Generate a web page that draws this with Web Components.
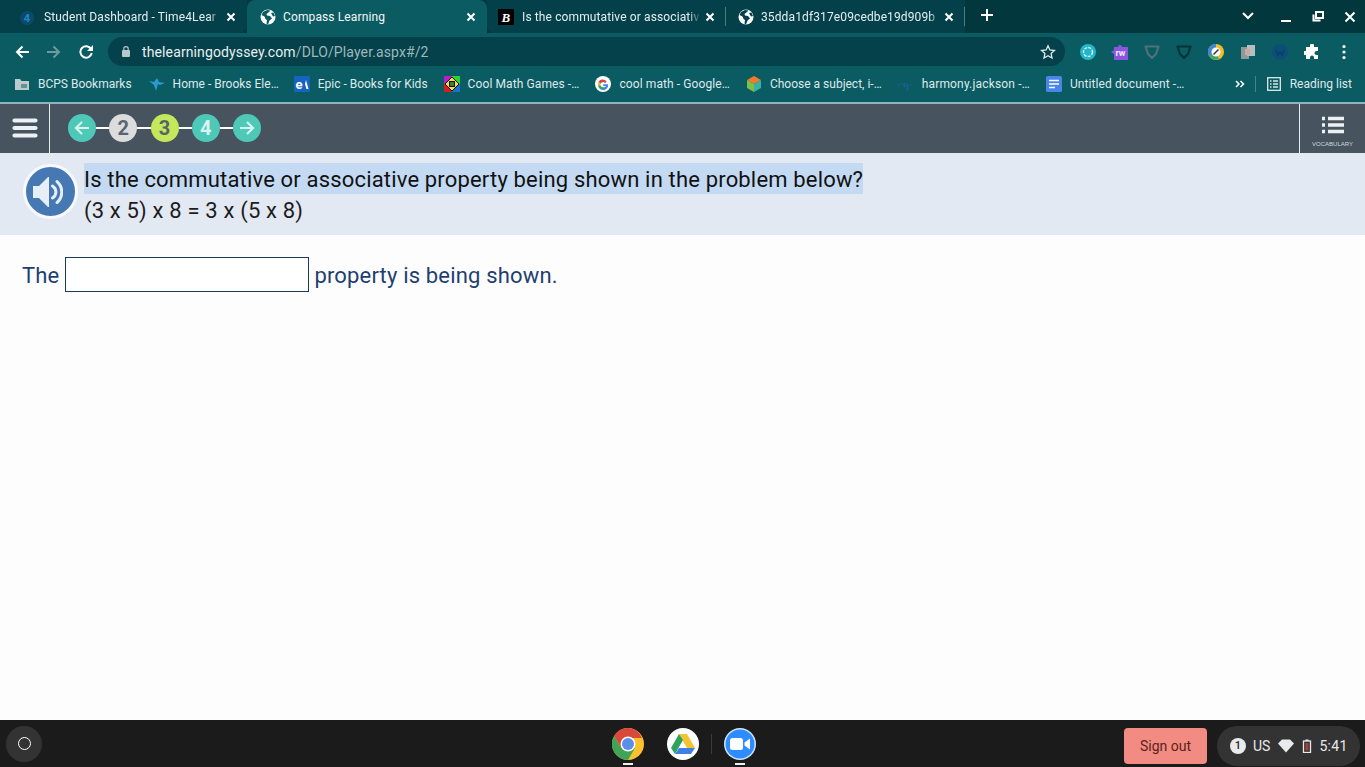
<!DOCTYPE html>
<html>
<head>
<meta charset="utf-8">
<title>Compass Learning</title>
<style>
html,body{margin:0;padding:0;height:100%;overflow:hidden;background:#fdfdfd;font-family:Roboto,"Liberation Sans",sans-serif}
body{display:flex;flex-direction:column;height:767px}
</style>
</head>
<body>
<tab-strip></tab-strip>
<nav-toolbar></nav-toolbar>
<bookmark-bar></bookmark-bar>
<player-bar></player-bar>
<question-panel>
  <span slot="prompt">Is the commutative or associative property being shown in the problem below?</span>
  <span slot="problem">(3 x 5) x 8 = 3 x (5 x 8)</span>
</question-panel>
<answer-area></answer-area>
<os-shelf></os-shelf>

<script>
const globe = `<svg width="16" height="16" viewBox="0 0 16 16"><circle cx="8" cy="8" r="7.500" fill="#fff"/><path d="M7 1 3 3 1.500 6l3 1.500 1 2.500L7 11l-.5 3.500 1.500 1 1.500-4 2.500-2-2-2.500-3-.5-.5-1.500L9 3l1.500-1.500z" fill="#0b5b62"/><path d="M11 4l2.500-.5L15 7l-2 .5z" fill="#0b5b62"/></svg>`;

class TabStrip extends HTMLElement{
    constructor(){
        super();
        this.attachShadow({mode:'open'});
        this.shadowRoot.innerHTML = `
        <style>
            :host{display:flex;height:33px;background:#03373e;color:#e4eeee;font:12px Roboto,sans-serif;align-items:stretch;padding-left:8px;flex:none}
            .tab{width:239px;display:flex;align-items:center;padding:0 9px;box-sizing:border-box;position:relative;gap:9px}
            .tab.first{background:#03404a;border-radius:0 0 8px 0;margin-left:-8px;width:247px;padding-left:19px}
            .tab.on{background:#0b5b62;border-radius:8px 8px 0 0;width:240px;padding-left:13px;gap:7px;color:#f4f8f8}
            .tab.after{background:#03404a;border-radius:0 0 0 8px}
            .tab.last{background:#03404a}
            .sep{position:absolute;right:0;top:7px;height:19px;width:1px;background:#4f7a80}
            .ico{width:16px;height:16px;flex:none;display:flex}
            .t{flex:1;white-space:nowrap;overflow:hidden;letter-spacing:.12px;-webkit-mask-image:linear-gradient(to left,transparent 0,#000 12px);mask-image:linear-gradient(to left,transparent 0,#000 12px)}
            .x{width:14px;height:14px;flex:none;margin-left:-6px}
            .x path,.ctl path{stroke:#fff;stroke-width:2;fill:none}
            .fill{flex:1;display:flex;align-items:flex-start;padding-top:7px;background:#03373e}
            .plus{margin-left:14px;width:16px;height:16px}
            .ctl{position:absolute;top:8px}
        </style>
        <div class="tab first">
            <span class="ico"><svg width="18" height="18" viewBox="0 0 18 18"><path d="M9 1a8 8 0 1 0 .01 0z" fill="#0b4a68"/><text x="5" y="14" font-size="13" font-weight="700" font-family="Roboto" fill="#1f86c7">4</text></svg></span>
            <span class="t">Student Dashboard - Time4Lear</span>
            <svg class="x" viewBox="0 0 14 14"><path d="M3.500 3.500l7 7M10.500 3.500l-7 7"/></svg>
        </div>
        <div class="tab on">
            <span class="ico">${globe}</span>
            <span class="t" style="-webkit-mask-image:none;mask-image:none">Compass Learning</span>
            <svg class="x" viewBox="0 0 14 14"><path d="M3.500 3.500l7 7M10.500 3.500l-7 7"/></svg>
        </div>
        <div class="tab after" style="padding-left:11px;gap:8px">
            <span class="ico"><svg width="16" height="16" viewBox="0 0 16 16"><rect width="16" height="16" fill="#000"/><text x="3.500" y="12.500" font-size="13" font-weight="700" font-style="italic" font-family="Liberation Serif" fill="#fff">B</text></svg></span>
            <span class="t">Is the commutative or associativ</span>
            <svg class="x" viewBox="0 0 14 14"><path d="M3.500 3.500l7 7M10.500 3.500l-7 7"/></svg>
            <i class="sep"></i>
        </div>
        <div class="tab last" style="padding-left:12px;gap:7px">
            <span class="ico">${globe.replace(/#0b5b62/g,'#03404a')}</span>
            <span class="t">35dda1df317e09cedbe19d909b</span>
            <svg class="x" viewBox="0 0 14 14"><path d="M3.500 3.500l7 7M10.500 3.500l-7 7"/></svg>
            <i class="sep"></i>
        </div>
        <div class="fill">
            <svg class="plus" viewBox="0 0 16 16"><path d="M8 2v12M2 8h12" stroke="#fff" stroke-width="2"/></svg>
        </div>
        <svg class="ctl" style="left:1241px;top:10px" width="14" height="12" viewBox="0 0 14 12"><path d="M2 3l5 5 5-5"/></svg>
        <svg class="ctl" style="left:1279px;top:10px" width="14" height="14" viewBox="0 0 14 14"><path d="M2 11h10"/></svg>
        <svg class="ctl" style="left:1311px;top:9px" width="14" height="14" viewBox="0 0 14 14"><path d="M5 3h7v6H5zM2.500 5.500v6h7" stroke-width="1.800"/></svg>
        <svg class="ctl" style="left:1343px;top:10px" width="14" height="14" viewBox="0 0 14 14"><path d="M2.500 2.500l9 9M11.500 2.500l-9 9"/></svg>
        `;
    }
}
customElements.define('tab-strip',TabStrip);

class NavToolbar extends HTMLElement{
    constructor(){
        super();
        this.attachShadow({mode:'open'});
        this.shadowRoot.innerHTML = `
        <style>
            :host{display:flex;height:34px;background:#0b5b62;align-items:center;flex:none;color:#fff;padding:3px 0 0 15px;box-sizing:border-box}
            svg{flex:none;display:block}
            .back{margin-right:18px}
            .fwd{margin-right:18px}
            .omni{width:957px;height:29px;border-radius:15px;background:#04414a;margin-left:15px;display:flex;align-items:center;box-sizing:border-box;padding-left:14px;font:14px Roboto,sans-serif;letter-spacing:.12px}
            .host{color:#e8f0f0;margin-left:12px}
            .path{color:#9db9bc}
            .star{margin-left:auto;margin-right:9px}
            .exts{display:flex;align-items:center;gap:16px;margin-left:15px}
        </style>
        <svg class="back" width="14" height="14" viewBox="0 0 14 14"><path d="M14 7H2M7.500 1.500 2 7l5.500 5.500" stroke="#fff" stroke-width="2" fill="none"/></svg>
        <svg class="fwd" width="14" height="14" viewBox="0 0 14 14"><path d="M0 7h12M6.500 1.500 12 7l-5.500 5.500" stroke="#6f9a9e" stroke-width="2" fill="none"/></svg>
        <svg width="14" height="14" viewBox="0 0 14 14"><path d="M12 4A5.700 5.700 0 1 0 12.700 8" stroke="#fff" stroke-width="2" fill="none"/><path d="M14 0v6H8z" fill="#fff"/></svg>
        <div class="omni">
            <svg width="8" height="11" viewBox="0 0 8 11"><rect y="4" width="8" height="7" rx="1" fill="#b5c8ca"/><path d="M1.800 4V2.800a2.200 2.200 0 0 1 4.400 0V4" stroke="#b5c8ca" stroke-width="1.200" fill="none"/></svg>
            <span class="host">thelearningodyssey.com</span><span class="path">/DLO/Player.aspx#/2</span>
            <svg class="star" width="16" height="16" viewBox="0 0 16 16"><path d="M8 1.800l1.900 4.200 4.500.5-3.300 3 .9 4.500L8 11.700 4 14l.9-4.500-3.300-3 4.500-.5z" stroke="#dfe9ea" stroke-width="1.300" fill="none"/></svg>
        </div>
        <div class="exts">
            <svg width="16" height="16" viewBox="0 0 16 16"><circle cx="8" cy="8" r="8" fill="#23b6c9"/><circle cx="8" cy="8" r="4.500" stroke="#d8f4f7" stroke-width="1.400" stroke-dasharray="3 1.200" fill="none"/></svg>
            <svg width="16" height="16" viewBox="0 0 16 16" overflow="visible"><path d="M-1 8l3-2V3h4a2 2 0 0 1 4 0h6v13H2v-6z" fill="#8a56e0"/><text x="3.500" y="12" font-size="9" font-weight="700" font-family="Roboto" fill="#f1eaff">rw</text></svg>
            <svg width="16" height="16" viewBox="0 0 16 16"><path d="M1.500 2.500h13l-2.500 7.500L8 14 4 10z" stroke="#4d7277" stroke-width="2.200" stroke-linejoin="round" fill="none"/></svg>
            <svg width="16" height="16" viewBox="0 0 16 16"><path d="M1.500 2.500h13l-2.500 7.500L8 14 4 10z" stroke="#063238" stroke-width="2.200" stroke-linejoin="round" fill="none"/></svg>
            <svg width="16" height="16" viewBox="0 0 16 16"><circle cx="8" cy="8" r="8" fill="#f1bd2e"/><path d="M8 0a8 8 0 0 0-7 12l7-4z" fill="#3f87d8"/><path d="M1 12a8 8 0 0 0 10 3L8 8z" fill="#3ea860"/><circle cx="8" cy="8" r="4.500" fill="#fff"/><path d="M5.500 10.500 10.500 5.500" stroke="#333" stroke-width="1.500"/></svg>
            <svg width="16" height="16" viewBox="0 0 16 16"><rect x="1" y="3" width="8" height="12" fill="#8a9b9d"/><rect x="7" y="1" width="8" height="11" fill="#b4bfc0"/><rect x="5" y="5" width="5" height="6" fill="#d3a6a0"/></svg>
            <svg width="16" height="16" viewBox="0 0 16 16"><circle cx="8" cy="8" r="8" fill="#0b4f78"/><path d="M4 6l2 5 2-3 2 3 2-5" stroke="#0a3f63" stroke-width="1.500" fill="none"/></svg>
            <svg width="16" height="16" viewBox="0 0 16 16"><path d="M6 1.500a2 2 0 0 1 4 0V3h4v4h-1.500a2 2 0 0 0 0 4H14v4h-4v-1.500a2 2 0 0 0-4 0V15H2v-4H.5a2 2 0 0 1 0-4H2V3h4z" fill="#fff"/></svg>
            <svg width="16" height="16" viewBox="0 0 16 16"><circle cx="8" cy="2.500" r="1.600" fill="#fff"/><circle cx="8" cy="8" r="1.600" fill="#fff"/><circle cx="8" cy="13.500" r="1.600" fill="#fff"/></svg>
        </div>
        `;
    }
}
customElements.define('nav-toolbar',NavToolbar);

class BookMark extends HTMLElement{
    constructor(){
        super();
        this.attachShadow({mode:'open'});
        this.shadowRoot.innerHTML = `
        <style>
            :host{display:inline-flex;align-items:center;gap:8px;white-space:nowrap;margin-right:16px}
            ::slotted(svg){flex:none}
        </style>
        <slot name="icon"></slot><slot></slot>`;
    }
}
customElements.define('book-mark',BookMark);

class BookmarkBar extends HTMLElement{
    constructor(){
        super();
        this.attachShadow({mode:'open'});
        this.shadowRoot.innerHTML = `
        <style>
            :host{display:flex;height:37px;background:#0b5b62;align-items:center;flex:none;color:#dfe9ea;font:12px Roboto,sans-serif;padding:0 0 1px 15px;box-sizing:border-box;border-bottom:2px solid #8fb3c0}
            .row{display:flex;align-items:center;flex:1}
            svg{display:block}
            .more{margin-left:auto;margin-right:9px}
            .div{width:1px;height:16px;background:#4f8085;margin-right:11px}
        </style>
        <div class="row">
            <book-mark style="gap:9px;margin-right:17px"><svg slot="icon" width="14" height="14" viewBox="0 0 14 14"><path d="M0 2h5l1.500 2H14v9H0z" fill="#b9cbcd"/><rect x="6" y="7" width="6" height="4" fill="#0b5b62" opacity=".5"/></svg>BCPS Bookmarks</book-mark>
            <book-mark style="margin-right:15px"><svg slot="icon" width="16" height="16" viewBox="0 0 16 16"><path d="M0 5l5 1 3-4 2 4 6 1-5 2-2-1-2 7-2-6z" fill="#2a9bd1"/></svg>Home - Brooks Ele…</book-mark>
            <book-mark><svg slot="icon" width="16" height="16" viewBox="0 0 16 16"><rect width="16" height="16" rx="1" fill="#1565c0"/><text x="1.500" y="13" font-size="13" font-weight="700" font-family="Roboto" fill="#fff">e</text><path d="M12 4l2.500 9h-2L11 8z" fill="#fff"/></svg>Epic - Books for Kids</book-mark>
            <book-mark style="letter-spacing:.1px"><svg slot="icon" width="16" height="16" viewBox="0 0 16 16"><rect width="8" height="8" fill="#b71cd1"/><rect x="8" width="8" height="8" fill="#2fd12f"/><rect y="8" width="8" height="8" fill="#d61c1c"/><rect x="8" y="8" width="8" height="8" fill="#1c6fd6"/><path d="M8 1l7 7-7 7-7-7z" fill="#f2e23a" stroke="#111"/><rect x="5.500" y="5.500" width="5" height="5" fill="#3f7d33" stroke="#111"/></svg>Cool Math Games -…</book-mark>
            <book-mark style="letter-spacing:.1px"><svg slot="icon" width="16" height="16" viewBox="0 0 16 16"><circle cx="8" cy="8" r="8" fill="#fff"/><path d="M13 8.200H8.200v1.900h2.700a3 3 0 1 1-.8-3.200l1.400-1.400A5 5 0 1 0 13 8.200z" fill="#4285f4"/><path d="M3.500 5.700 5.200 7A3 3 0 0 1 10.100 6.900l1.400-1.400A5 5 0 0 0 3.500 5.700z" fill="#ea4335"/><path d="M3.500 10.300 5.200 9a3 3 0 0 0 .5 1 3 3 0 0 0 3.500 1l1.500 1.300A5 5 0 0 1 3.500 10.300z" fill="#34a853"/><path d="M3.500 5.700a5 5 0 0 0 0 4.600L5.200 9a3 3 0 0 1 0-2z" fill="#fbbc05"/></svg>cool math - Google…</book-mark>
            <book-mark><svg slot="icon" width="16" height="16" viewBox="0 0 16 16"><path d="M8 0l7 4-7 4-7-4z" fill="#f47a2a"/><path d="M1 4l7 4v8l-7-4z" fill="#7cc04a"/><path d="M15 4l-7 4v8l7-4z" fill="#3bb0a6"/></svg>Choose a subject, i-…</book-mark>
            <book-mark style="letter-spacing:.17px"><svg slot="icon" width="16" height="16" viewBox="0 0 16 16"><path d="M0 9h2M3 8h2M6 7h1v4H6zM9 8h1v6H9zM12 9h2" stroke="#1f5f9c" stroke-width="1" fill="none"/></svg>harmony.jackson -…</book-mark>
            <book-mark style="letter-spacing:.1px"><svg slot="icon" width="16" height="16" viewBox="0 0 16 16"><rect width="16" height="16" rx="1.500" fill="#4a86e8"/><path d="M3 4.500h10M3 8h10M3 11.500h6" stroke="#fff" stroke-width="1.500"/></svg>Untitled document -…</book-mark>
            <svg class="more" width="12" height="12" viewBox="0 0 12 12"><path d="M2 3l3 3-3 3M6.500 3l3 3-3 3" stroke="#fff" stroke-width="1.500" fill="none"/></svg>
            <i class="div"></i>
            <book-mark style="gap:9px;margin-right:13px"><svg slot="icon" width="14" height="14" viewBox="0 0 14 14"><rect x=".7" y=".7" width="12.600" height="12.600" stroke="#dfe9ea" stroke-width="1.300" fill="none"/><path d="M3 4h1.500M3 7h1.500M3 10h1.500M6 4h5M6 7h5M6 10h5" stroke="#dfe9ea" stroke-width="1.300"/></svg>Reading list</book-mark>
        </div>
        `;
    }
}
customElements.define('bookmark-bar',BookmarkBar);

class StepDot extends HTMLElement{
    constructor(){
        super();
        this.attachShadow({mode:'open'});
        this.shadowRoot.innerHTML = `
        <style>
            :host{display:flex;width:28px;height:28px;border-radius:50%;align-items:center;justify-content:center;background:var(--dot,#4ec9b8);color:var(--ink,#fff);font:700 20px Roboto,sans-serif;flex:none}
        </style>
        <slot></slot>`;
    }
}
customElements.define('step-dot',StepDot);

class PlayerBar extends HTMLElement{
    constructor(){
        super();
        this.attachShadow({mode:'open'});
        this.shadowRoot.innerHTML = `
        <style>
            :host{display:flex;height:49px;background:#47535f;flex:none;align-items:stretch}
            .menu{width:49px;border-right:1px solid #e6ecef;display:flex;align-items:center;justify-content:center;padding-bottom:1px;box-sizing:content-box;height:48px}
            .steps{display:flex;align-items:center;padding:0 0 1px 18px;flex:1}
            .ln{width:13.250px;height:2px;background:#fff;flex:none}
            .vocab{width:66px;border-left:1px solid #e6ecef;display:flex;flex-direction:column;align-items:center;color:#d3dade;font:6px "Liberation Sans",sans-serif;padding-top:12px;box-sizing:border-box}
            .vocab svg{margin-bottom:7px}
            svg{display:block}
        </style>
        <div class="menu"><svg width="26" height="20" viewBox="0 0 26 20"><path d="M2.500 2.500h21M2.500 10h21M2.500 17.500h21" stroke="#eef1f3" stroke-width="4.200" stroke-linecap="round"/></svg></div>
        <div class="steps">
            <step-dot><svg width="18" height="18" viewBox="0 0 18 18"><path d="M16 9H3M9 3 3 9l6 6" stroke="#d9f3ef" stroke-width="2.200" fill="none"/></svg></step-dot>
            <i class="ln"></i>
            <step-dot style="--dot:#dcdcdc;--ink:#5a6570">2</step-dot>
            <i class="ln"></i>
            <step-dot style="--dot:#c4e85a;--ink:#55656a">3</step-dot>
            <i class="ln"></i>
            <step-dot style="--ink:#d9f3ef">4</step-dot>
            <i class="ln"></i>
            <step-dot><svg width="18" height="18" viewBox="0 0 18 18"><path d="M2 9h13M9 3l6 6-6 6" stroke="#d9f3ef" stroke-width="2.200" fill="none"/></svg></step-dot>
        </div>
        <div class="vocab">
            <svg width="22" height="18" viewBox="0 0 22 18"><path d="M0 2.500h3M6 2.500h16M0 9h3M6 9h16M0 15.500h3M6 15.500h16" stroke="#eef1f3" stroke-width="3.400"/></svg>
            <span>VOCABULARY</span>
        </div>
        `;
    }
}
customElements.define('player-bar',PlayerBar);

class QuestionPanel extends HTMLElement{
    constructor(){
        super();
        this.attachShadow({mode:'open'});
        this.shadowRoot.innerHTML = `
        <style>
            :host{display:flex;height:82px;background:#e3e9f3;flex:none;padding:10px 0 0 23px;box-sizing:border-box;color:#1c1c1c;font:22px Roboto,sans-serif;letter-spacing:.17px;gap:6px}
            .spk{width:55px;height:55px;border-radius:50%;background:#4679b4;border:3px solid #f7f9fc;box-sizing:border-box;display:flex;align-items:center;justify-content:center;flex:none;margin-top:1px}
            .spk svg{margin-right:5px}
            .txt{display:flex;flex-direction:column;align-items:flex-start}
            .sel{background:#c4daf3;color:#111;padding-top:2px;line-height:29px}
            .prob{line-height:31px;margin-top:1px}
        </style>
        <div class="spk"><svg width="30" height="30" viewBox="0 0 30 30"><path d="M0 9h6L15 0h1v30h-1L6 21H0z" fill="#e7eef6"/><path d="M19.500 9a7 7 0 0 1 0 12M24 4.500a14 14 0 0 1 0 21" stroke="#e7eef6" stroke-width="3" fill="none" stroke-linecap="round"/></svg></div>
        <div class="txt">
            <div class="sel"><slot name="prompt"></slot></div>
            <div class="prob"><slot name="problem"></slot></div>
        </div>
        `;
    }
}
customElements.define('question-panel',QuestionPanel);

class AnswerArea extends HTMLElement{
    constructor(){
        super();
        this.attachShadow({mode:'open'});
        this.shadowRoot.innerHTML = `
        <style>
            :host{display:flex;flex:1;background:#fdfdfd;align-items:flex-start;padding:22px 0 0 22px;box-sizing:border-box;color:#1d3f72;font:22px Roboto,sans-serif;letter-spacing:.17px;gap:6px}
            span{line-height:37px;height:35px;display:block}
            span.rest{margin-left:-1px}
            input{width:244px;height:35px;box-sizing:border-box;border:1px solid #1c3a56;background:#fff;padding:0 4px;margin:0;outline:none;border-radius:0;font:inherit}
        </style>
        <span>The</span><input type="text" aria-label="answer"><span class="rest">property is being shown.</span>
        `;
    }
}
customElements.define('answer-area',AnswerArea);

class OsShelf extends HTMLElement{
    constructor(){
        super();
        this.attachShadow({mode:'open'});
        this.shadowRoot.innerHTML = `
        <style>
            :host{display:flex;height:47px;background:#1b1b1b;flex:none;align-items:center;position:relative;font:14px Roboto,sans-serif}
            .launcher{width:36px;height:36px;border-radius:50%;background:#333;margin-left:6px;display:flex;align-items:center;justify-content:center;flex:none}
            .launcher i{width:13px;height:13px;border:1.500px solid #fff;border-radius:50%;display:block;box-sizing:border-box}
            .apps{position:absolute;left:612px;top:0;height:47px;display:flex;align-items:center}
            .app{position:relative;display:block;height:32px}
            .pip{position:absolute;left:50%;margin-left:-5px;bottom:-5px;width:10px;height:2px;background:#eee}
            .vr{width:1px;height:20px;background:#3c3c3c;margin:0 12px}
            .right{margin-left:auto;display:flex;align-items:center;gap:10px;margin-right:5px;margin-top:4px}
            .out{width:83px;height:36px;background:#f28b82;color:#5c1f1c;border-radius:4px;display:flex;align-items:center;justify-content:center}
            .tray{width:143px;height:40px;background:#333;border-radius:20px;display:flex;align-items:center;color:#e8eaed;padding-left:13px;box-sizing:border-box;gap:6px}
            .n{width:16px;height:16px;border-radius:50%;background:#e8eaed;color:#222;font-size:11px;font-weight:500;display:flex;align-items:center;justify-content:center}
            svg{display:block}
        </style>
        <div class="launcher"><i></i></div>
        <div class="apps">
            <span class="app" style="margin-right:23px"><svg width="32" height="32" viewBox="0 0 32 32"><circle cx="16" cy="16" r="16" fill="#fbc02d"/><path d="M16 0A16 16 0 0 0 2.100 8l7 12L16 10h13.900A16 16 0 0 0 16 0z" fill="#d8493c"/><path d="M2.100 8A16 16 0 0 0 16 32l7-12-13.900 0z" fill="#3fa457"/><circle cx="16" cy="16" r="7.500" fill="#fff"/><circle cx="16" cy="16" r="6" fill="#5a8ee8"/></svg><i class="pip"></i></span>
            <span class="app"><svg width="32" height="32" viewBox="0 0 32 32"><circle cx="16" cy="16" r="16" fill="#fff"/><path d="M12 6h8l8 14h-8z" fill="#f4c430"/><path d="M12 6 4 20l4 6 8-14z" fill="#2fa35a"/><path d="M8 26h16l4-6H12z" fill="#3f80e8"/></svg></span>
            <i class="vr"></i>
            <span class="app"><svg width="32" height="32" viewBox="0 0 32 32"><circle cx="16" cy="16" r="16" fill="#cfe4ff"/><circle cx="16" cy="16" r="14.500" fill="#2d8cff"/><rect x="6" y="10" width="13" height="12" rx="2.500" fill="#fff"/><path d="M20.500 14.500 26 10.500v11l-5.500-4z" fill="#fff"/></svg><i class="pip"></i></span>
        </div>
        <div class="right">
            <div class="out">Sign out</div>
            <div class="tray">
                <span class="n">1</span><span style="margin-left:1px">US</span>
                <svg width="16" height="14" viewBox="0 0 16 14" style="margin-left:2px"><path d="M0 4.500 4 .5h8l4 4-8 9z" fill="#e8eaed"/></svg>
                <svg width="10" height="14" viewBox="0 0 10 14" style="margin-left:2px"><rect x="1.500" y="2" width="7" height="11.500" fill="none" stroke="#e8eaed" stroke-width="1.300"/><rect x="3.500" y=".5" width="3" height="1.500" fill="#e8eaed"/><rect x="3.500" y="4" width="3" height="7.500" fill="#a8413a"/></svg>
                <span style="margin-left:1px;letter-spacing:.3px">5:41</span>
            </div>
        </div>
        `;
    }
}
customElements.define('os-shelf',OsShelf);
</script>
</body>
</html>
